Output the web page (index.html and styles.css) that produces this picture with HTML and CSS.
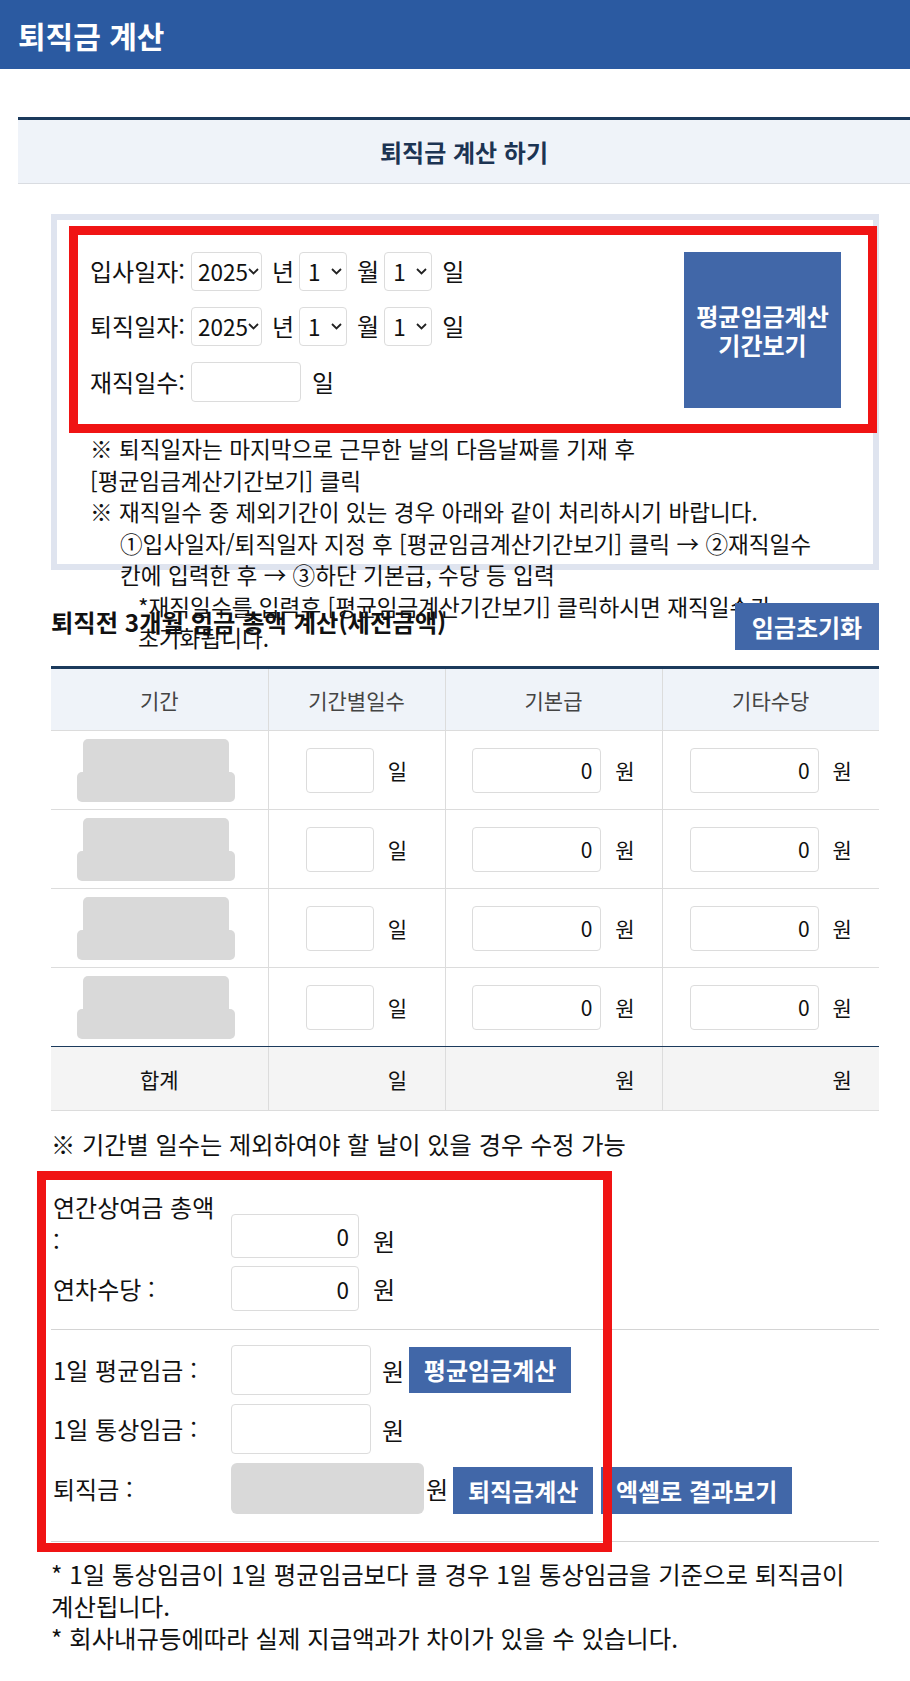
FILE: index.html
```html
<!DOCTYPE html>
<html lang="ko">
<head>
<meta charset="utf-8">
<title>퇴직금 계산</title>
<link rel="stylesheet" href="styles.css">
</head>
<body>
<header class="topbar"><h1 class="topbar-title">퇴직금 계산</h1></header>
<div class="title-box">퇴직금 계산 하기</div>
<main class="content">
  <section class="period-box">
    <div class="period-form">
      <div class="date-rows">
        <div class="date-row">
          <span class="date-label">입사일자:</span>
          <span class="sel sel-year"><span>2025</span><svg viewBox="0 0 11 7"><path d="M1 1 L5.5 5.5 L10 1"/></svg></span>
          <span class="unit">년</span>
          <span class="sel sel-small"><span>1</span><svg viewBox="0 0 11 7"><path d="M1 1 L5.5 5.5 L10 1"/></svg></span>
          <span class="unit">월</span>
          <span class="sel sel-small"><span>1</span><svg viewBox="0 0 11 7"><path d="M1 1 L5.5 5.5 L10 1"/></svg></span>
          <span class="unit">일</span>
        </div>
        <div class="date-row">
          <span class="date-label">퇴직일자:</span>
          <span class="sel sel-year"><span>2025</span><svg viewBox="0 0 11 7"><path d="M1 1 L5.5 5.5 L10 1"/></svg></span>
          <span class="unit">년</span>
          <span class="sel sel-small"><span>1</span><svg viewBox="0 0 11 7"><path d="M1 1 L5.5 5.5 L10 1"/></svg></span>
          <span class="unit">월</span>
          <span class="sel sel-small"><span>1</span><svg viewBox="0 0 11 7"><path d="M1 1 L5.5 5.5 L10 1"/></svg></span>
          <span class="unit">일</span>
        </div>
        <div class="date-row">
          <span class="date-label">재직일수:</span>
          <input class="field days-input" type="text">
          <span class="unit unit-days">일</span>
        </div>
      </div>
      <button class="btn btn-period">평균임금계산<br>기간보기</button>
    </div>
    <div class="notes">
      <p>※ 퇴직일자는 마지막으로 근무한 날의 다음날짜를 기재 후<br>[평균임금계산기간보기] 클릭</p>
      <p>※ 재직일수 중 제외기간이 있는 경우 아래와 같이 처리하시기 바랍니다.</p>
      <p class="sub">①입사일자/퇴직일자 지정 후 [평균임금계산기간보기] 클릭 → ②재직일수<br>칸에 입력한 후 → ③하단 기본급, 수당 등 입력</p>
      <p class="sub2">*재직일수를 입력후 [평균임금계산기간보기] 클릭하시면 재직일수가<br>초기화됩니다.</p>
    </div>
  </section>

  <div class="section-head">
    <h2 class="section-title">퇴직전 3개월 임금 총액 계산(세전금액)</h2>
    <button class="btn btn-reset">임금초기화</button>
  </div>

  <table class="wage-table">
    <colgroup><col class="c-wide"><col class="c-narrow"><col class="c-wide"><col class="c-wide"></colgroup>
    <thead>
      <tr><th>기간</th><th>기간별일수</th><th>기본급</th><th>기타수당</th></tr>
    </thead>
    <tbody>
      <tr class="data-row">
        <td><div class="masked"><span class="mask-top"></span><span class="mask-bottom"></span></div></td>
        <td><div class="cell-in"><input class="field t-day" type="text"><span class="unit-t">일</span></div></td>
        <td><div class="cell-in"><input class="field t-money" type="text" value="0"><span class="unit-t">원</span></div></td>
        <td><div class="cell-in"><input class="field t-money" type="text" value="0"><span class="unit-t">원</span></div></td>
      </tr>
      <tr class="data-row">
        <td><div class="masked"><span class="mask-top"></span><span class="mask-bottom"></span></div></td>
        <td><div class="cell-in"><input class="field t-day" type="text"><span class="unit-t">일</span></div></td>
        <td><div class="cell-in"><input class="field t-money" type="text" value="0"><span class="unit-t">원</span></div></td>
        <td><div class="cell-in"><input class="field t-money" type="text" value="0"><span class="unit-t">원</span></div></td>
      </tr>
      <tr class="data-row">
        <td><div class="masked"><span class="mask-top"></span><span class="mask-bottom"></span></div></td>
        <td><div class="cell-in"><input class="field t-day" type="text"><span class="unit-t">일</span></div></td>
        <td><div class="cell-in"><input class="field t-money" type="text" value="0"><span class="unit-t">원</span></div></td>
        <td><div class="cell-in"><input class="field t-money" type="text" value="0"><span class="unit-t">원</span></div></td>
      </tr>
      <tr class="data-row last">
        <td><div class="masked"><span class="mask-top"></span><span class="mask-bottom"></span></div></td>
        <td><div class="cell-in"><input class="field t-day" type="text"><span class="unit-t">일</span></div></td>
        <td><div class="cell-in"><input class="field t-money" type="text" value="0"><span class="unit-t">원</span></div></td>
        <td><div class="cell-in"><input class="field t-money" type="text" value="0"><span class="unit-t">원</span></div></td>
      </tr>
      <tr class="total-row">
        <td>합계</td>
        <td><div class="cell-in"><span class="ghost-day"></span><span class="unit-t">일</span></div></td>
        <td><div class="cell-in"><span class="ghost-money"></span><span class="unit-t">원</span></div></td>
        <td><div class="cell-in"><span class="ghost-money"></span><span class="unit-t">원</span></div></td>
      </tr>
    </tbody>
  </table>

  <p class="table-note">※ 기간별 일수는 제외하여야 할 날이 있을 경우 수정 가능</p>

  <section class="calc">
    <div class="calc-row wrap">
      <span class="calc-label">연간상여금 총액 :</span>
      <input class="field in-amount" type="text" value="0">
      <span class="unit-c u-amount">원</span>
    </div>
    <div class="calc-row row-2">
      <span class="calc-label">연차수당 :</span>
      <input class="field in-amount tall" type="text" value="0">
      <span class="unit-c u-amount">원</span>
    </div>
    <hr class="rule rule-mid">
    <div class="calc-row">
      <span class="calc-label">1일 평균임금 :</span>
      <input class="field in-empty" type="text">
      <span class="unit-c u-empty">원</span>
      <button class="btn btn-avg">평균임금계산</button>
    </div>
    <div class="calc-row row-gap">
      <span class="calc-label">1일 통상임금 :</span>
      <input class="field in-empty" type="text">
      <span class="unit-c u-empty">원</span>
    </div>
    <div class="calc-row row-gap">
      <span class="calc-label">퇴직금 :</span>
      <span class="out-field"></span>
      <span class="unit-c u-out">원</span>
      <button class="btn btn-calc">퇴직금계산</button>
      <button class="btn btn-excel">엑셀로 결과보기</button>
    </div>
    <hr class="rule rule-end">
  </section>

  <div class="footer-notes">
    <p>* 1일 통상임금이 1일 평균임금보다 클 경우 1일 통상임금을 기준으로 퇴직금이 계산됩니다.</p>
    <p>* 회사내규등에따라 실제 지급액과가 차이가 있을 수 있습니다.</p>
  </div>
</main>

<div class="mark mark-1"></div>
<div class="mark mark-2"></div>
</body>
</html>
```

FILE: styles.css
```css
* { box-sizing: border-box; }

body {
  margin: 0;
  position: relative;
  font-family: "Noto Sans CJK KR", "Noto Sans", sans-serif;
  color: #111;
  background: #fff;
  word-break: keep-all;
}

/* top bar */
.topbar {
  height: 69px;
  background: #2b5aa1;
  display: flex;
  align-items: center;
  padding-left: 18px;
}
.topbar-title {
  margin: 0;
  color: #fff;
  font-size: 30px;
  font-weight: 700;
  line-height: 1;
}

.title-box {
  margin: 48px 0 0 18px;
  height: 67px;
  border-top: 3px solid #1b3a5c;
  border-bottom: 1px solid #d9dce1;
  background: #eff3f9;
  display: flex;
  align-items: center;
  justify-content: center;
  font-size: 24px;
  font-weight: 700;
  color: #1c3453;
}

.content {
  margin-left: 51px;
  width: 828px;
}

/* period box */
.period-box {
  margin-top: 30px;
  height: 356px;
  border: 6px solid #dfe4ef;
  padding: 32px 32px 0 33px;
  background: #fff;
}
.period-form {
  display: flex;
  justify-content: space-between;
  align-items: flex-start;
}
.date-rows {
  display: flex;
  flex-direction: column;
  gap: 16px;
}
.date-row {
  display: flex;
  align-items: center;
  font-size: 24px;
  line-height: 1.2;
  height: 39px;
}
.date-row:last-child { height: 40px; }
.date-label { width: 101px; }
.sel {
  height: 39px;
  border: 1px solid #dcdcdc;
  border-radius: 4px;
  display: flex;
  align-items: center;
  justify-content: space-between;
  font-size: 22.5px;
  background: #fff;
}
.sel-year { width: 71px; padding: 0 3px 0 6px; }
.sel-small { width: 48px; padding: 0 4px 0 8px; }
.sel svg {
  width: 11px;
  height: 7px;
  flex: none;
  fill: none;
  stroke: #222;
  stroke-width: 1.8;
}
.unit { margin: 0 5px 0 10px; }
.days-input { width: 110px; height: 40px; }
.unit-days { margin-left: 11px; }

.field {
  border: 1px solid #dcdcdc;
  border-radius: 4px;
  background: #fff;
  font-family: inherit;
  color: #111;
  margin: 0;
  outline: none;
}

.btn {
  border: 0;
  background: #4167a8;
  color: #fff;
  font-family: inherit;
  font-weight: 700;
  font-size: 24px;
  padding: 0;
  line-height: 1;
  cursor: pointer;
  flex: none;
  white-space: nowrap;
}
.btn-period {
  width: 157px;
  height: 156px;
  line-height: 29px;
}

.notes {
  margin-top: 25px;
  font-size: 22.6px;
  line-height: 31.5px;
}
.notes p { margin: 0; white-space: nowrap; }
.notes .sub { padding-left: 30px; }
.notes .sub2 { padding-left: 48px; }

/* section heading */
.section-head {
  margin-top: 33px;
  height: 47px;
  display: flex;
  justify-content: space-between;
  align-items: flex-start;
  position: relative;
}
.section-title {
  margin: 0;
  font-size: 24.3px;
  font-weight: 700;
  line-height: 38px;
}
.btn-reset { width: 144px; height: 47px; }

/* table */
.wage-table {
  margin-top: 16px;
  width: 828px;
  border-collapse: collapse;
  table-layout: fixed;
  border-top: 3px solid #1b3a5c;
}
.c-wide { width: 217px; }
.c-narrow { width: 177px; }
.wage-table th {
  height: 63px;
  background: #eff3f9;
  font-weight: 400;
  font-size: 21px;
  color: #444;
  border-bottom: 1px solid #dcdcdc;
  padding: 0;
}
.wage-table th + th,
.wage-table td + td { border-left: 1px solid #dcdcdc; }
.wage-table td {
  padding: 0;
  text-align: center;
  vertical-align: middle;
  border-bottom: 1px solid #dcdcdc;
  font-size: 21px;
}
.data-row td { height: 79px; }
.data-row.last td { border-bottom-color: #1b3a5c; }
.total-row td {
  height: 64px;
  background: #f4f4f4;
}
.cell-in {
  display: flex;
  align-items: center;
  justify-content: center;
}
.t-day { width: 68px; height: 45px; }
.t-money {
  width: 129px;
  height: 45px;
  text-align: right;
  padding-right: 8px;
  font-size: 21px;
}
.ghost-day { width: 68px; height: 1px; }
.ghost-money { width: 129px; height: 1px; }
.unit-t { margin-left: 14px; font-size: 21px; }

.masked {
  display: flex;
  flex-direction: column;
  align-items: center;
  margin-right: 7px;
}
.mask-top {
  width: 146px;
  height: 33px;
  background: #d9d9d9;
  border-radius: 5px 5px 0 0;
}
.mask-bottom {
  width: 158px;
  height: 30px;
  background: #d9d9d9;
  border-radius: 5px;
}

.table-note {
  margin: 16px 0 0;
  font-size: 24.2px;
  line-height: 34px;
}

/* calc section */
.calc { margin-top: 29px; }
.calc-row {
  display: flex;
  align-items: center;
}
.calc-row.wrap { align-items: flex-end; }
.row-2 { margin-top: 8px; }
.row-gap { margin-top: 9px; }
.calc-label {
  width: 166px;
  padding-left: 2px;
  margin-right: 14px;
  font-size: 24px;
  line-height: 34px;
  flex: none;
}
.in-amount {
  width: 128px;
  height: 44px;
  text-align: right;
  padding-right: 9px;
  font-size: 22.5px;
}
.in-amount.tall { height: 45px; }
.in-empty { width: 140px; height: 50px; }
.out-field {
  width: 193px;
  height: 51px;
  background: #d9d9d9;
  border-radius: 6px;
  flex: none;
}
.unit-c { font-size: 24px; }
.u-amount { margin-left: 14px; }
.u-empty { margin-left: 11px; }
.u-out { margin-left: 2px; }
.btn-avg { width: 162px; height: 46px; margin-left: 5px; }
.btn-calc { width: 140px; height: 47px; margin-left: 5px; margin-top: 4px; align-self: flex-end; }
.btn-excel { width: 191px; height: 47px; margin-left: 8px; margin-top: 4px; align-self: flex-end; }

.rule {
  height: 1px;
  border: 0;
  background: #d4d4d4;
  margin: 0;
}
.rule-mid { margin: 18px 0 15px; }
.rule-end { margin-top: 27px; }

.footer-notes {
  margin-top: 16px;
  font-size: 24.4px;
  line-height: 32px;
}
.footer-notes p { margin: 0; }

/* red annotation frames laid over the screenshot */
.mark {
  position: absolute;
  border: 9px solid #f01414;
  pointer-events: none;
}
.mark-1 { left: 69px; top: 226px; width: 808px; height: 207px; }
.mark-2 { left: 37px; top: 1171px; width: 575px; height: 381px; }
```
